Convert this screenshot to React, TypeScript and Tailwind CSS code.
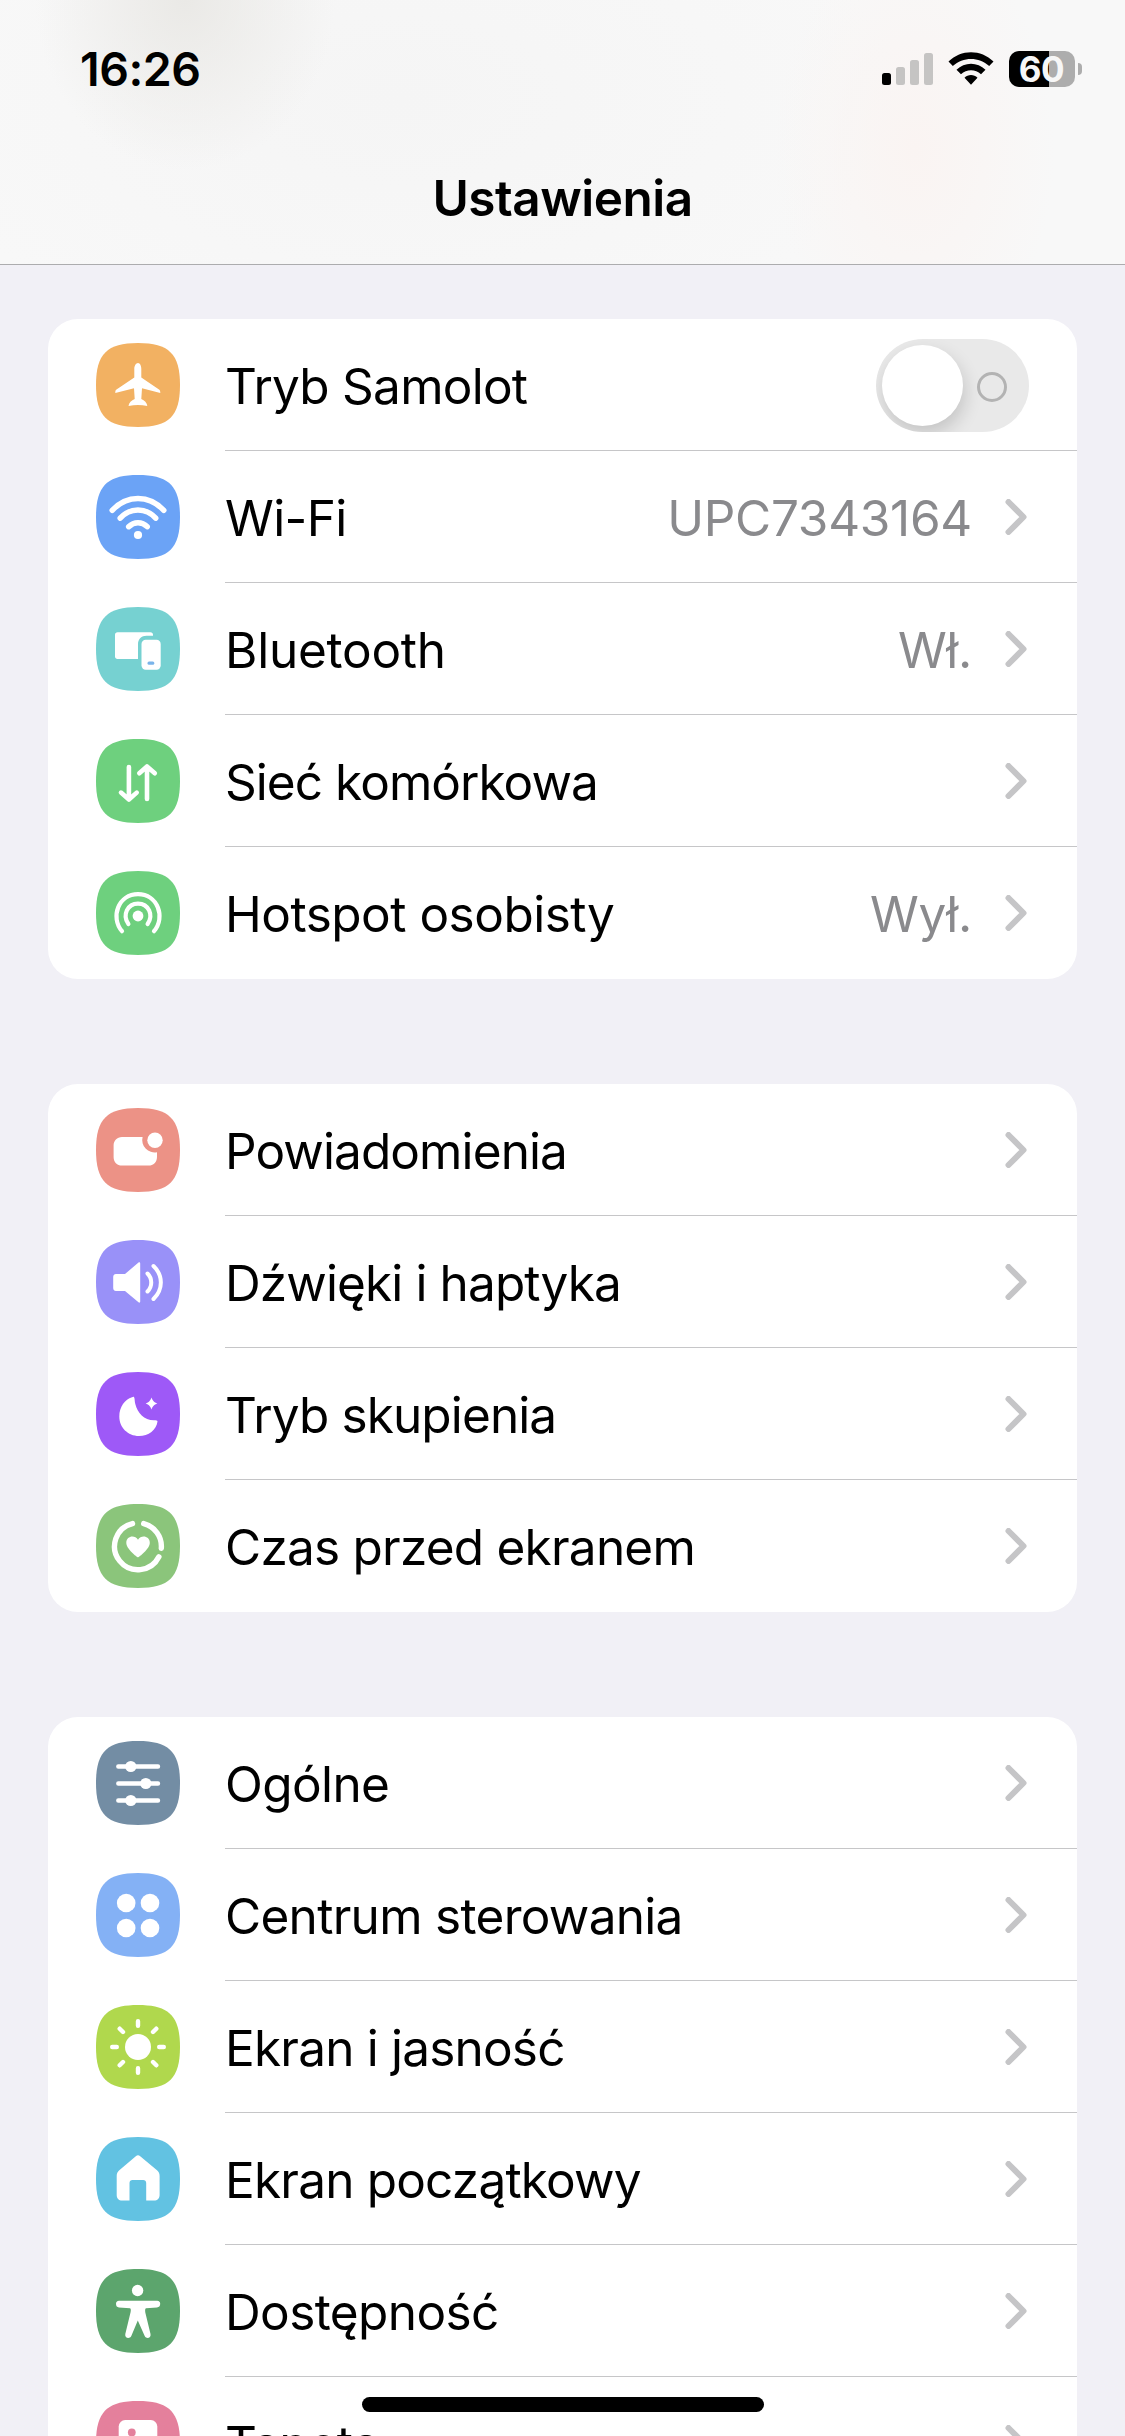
import React from "react";

type RowData = {
  label: string;
  color: string;
  icon: React.ReactNode;
  tracking: string;
  value?: string;
  toggle?: boolean;
};

const line = {
  fill: "none",
  stroke: "white",
  strokeLinecap: "round" as const,
  strokeLinejoin: "round" as const,
};

function IconTile({ color, children }: { color: string; children: React.ReactNode }) {
  return (
    <svg className="block size-[84px] shrink-0" viewBox="0 0 84 84" fill="white">
      <path
        fill={color}
        d="M42 0C73 0 84 11 84 42C84 73 73 84 42 84C11 84 0 73 0 42C0 11 11 0 42 0Z"
      />
      {children}
    </svg>
  );
}

const plane = (
  <path d="M42 20C44 20 45.300 22.800 45.300 26V34.500L63 46.500C64 47.200 64.300 48 64.300 50L46 45.200L45.300 56C48.500 57.500 51 59.700 51.300 63C45 61.800 39 61.800 32.500 63C32.800 59.700 35.500 57.500 38.700 56L38 45.200L19.300 50C19.300 48 19.500 47.200 20.500 46.500L38.300 34.500V26C38.300 22.800 40 20 42 20Z" />
);

const wifi = (
  <g>
    <path {...line} strokeWidth="5.500" d="M16.200 35.300C31 19.500 53 19.500 67.800 35.300" />
    <path {...line} strokeWidth="5.500" d="M24.200 43.200C34 32.400 50 32.400 59.700 43.200" />
    <path {...line} strokeWidth="5.500" d="M32.700 51.700C38 46.300 46 46.300 51.200 51.700" />
    <circle cx="42" cy="60" r="4.100" />
  </g>
);

const devices = (
  <g>
    <path d="M21.500 25.200H54.500C56 25.200 57 26.200 57 27.700V28.800H50.500C45.500 28.800 42 32.300 42 37V52H21.500C20 52 19 51 19 49.500V27.700C19 26.200 20 25.200 21.500 25.200Z" />
    <rect x="45.500" y="32.800" width="19.200" height="30" rx="4.200" />
    <rect x="51.500" y="54.500" width="6.800" height="3.200" rx="1.500" fill="#7ab4ea" />
  </g>
);

const arrows = (
  <path {...line} strokeWidth="4.600" d="M32.900 28V60.500M25 53.600L32.900 60.500L40.700 53.600M51 60V27.500M43.300 34.300L51 27.500L58.800 34.300" />
);

const hotspot = (
  <g>
    <circle cx="42" cy="45" r="5.400" />
    <path {...line} strokeWidth="4.200" d="M32.400 53C26 44 31.500 32.600 42 32.600C52.500 32.600 58 44 51.600 53" />
    <path {...line} strokeWidth="4.200" d="M26 60.200C14 46 22.500 23.200 42 23.200C61.500 23.200 70 46 58 60.200" />
  </g>
);

const notification = (
  <g>
    <path d="M26 29H46.600A12.400 12.400 0 0 0 61 44.200V49C61 54 57.500 57.600 52.500 57.600H26C21 57.600 17.600 54 17.600 49V37.600C17.600 32.600 21 29 26 29Z" />
    <circle cx="59" cy="32.200" r="7.700" />
  </g>
);

const sound = (
  <g>
    <path d="M20 34H29L42.500 22.600C43.300 22 44.200 22.400 44.200 23.500V61.500C44.200 62.600 43.300 63 42.500 62.300L29 51H20C18.300 51 17.200 49.800 17.200 48V37C17.200 35.200 18.300 34 20 34Z" />
    <path {...line} strokeWidth="4" d="M51.500 33.500C56.500 38.500 56.500 46.500 51.500 51.500M57.500 26C67.300 35.500 67.300 49.500 57.500 59" />
  </g>
);

const moon = (
  <g>
    <path d="M38 25C39 27 38.500 29 39.300 32C41.500 41 48 48 58 48.300C60 48.300 61.500 48.500 61.500 49.500C60.500 58 52.500 64 43 64C32 64 23.300 55.500 23.300 44.500C23.300 35 29 27.500 36 25.300C37 24.900 37.600 24.600 38 25Z" />
    <path d="M55.500 25.500C56.800 29 58 30.200 61.300 31.500C58 32.800 56.800 34 55.500 37.500C54.200 34 53 32.800 49.700 31.500C53 30.200 54.200 29 55.500 25.500Z" />
  </g>
);

const screenTime = (
  <g>
    <path {...line} strokeWidth="5.400" d="M36.500 19.600A23.400 23.400 0 1 0 62.900 52.800M47.700 19.600A23.400 23.400 0 0 1 65.300 44.300" />
    <path d="M42 53.300C41 53.300 30.300 45 30.300 38.800C30.300 32 38.800 30.500 42 35.800C45.200 30.500 53.800 32 53.800 38.800C53.800 45 43 53.300 42 53.300Z" />
  </g>
);

const sliders = (
  <g>
    <path {...line} strokeWidth="4.400" d="M22.300 25.500H62M22.300 42.500H62M22.300 59.500H62" />
    <circle cx="34.800" cy="25.500" r="5.600" />
    <circle cx="49.800" cy="42.500" r="5.600" />
    <circle cx="34.800" cy="59.500" r="5.600" />
  </g>
);

const fourDots = (
  <g>
    <circle cx="30.200" cy="30" r="9.300" />
    <circle cx="54" cy="30" r="9.300" />
    <circle cx="30.200" cy="55" r="9.300" />
    <circle cx="54" cy="55" r="9.300" />
  </g>
);

const sun = (
  <g>
    <circle cx="42" cy="42" r="13" />
    <path {...line} strokeWidth="4.400" d="M42 16.200V20.800M42 63.200V67.800M16.200 42H20.800M63.200 42H67.800M23.700 23.700L27 27M57 57L60.300 60.300M60.300 23.700L57 27M27 57L23.700 60.300" />
  </g>
);

const house = (
  <path d="M39.800 19.300C41.300 18 42.700 18 44.200 19.300L61 33.300C62.800 34.800 63.600 36.500 63.600 39V58C63.600 61.300 61.500 63.600 58 63.600H50.200V46C50.200 44.200 49 43 47.200 43H36.500C34.700 43 33.500 44.200 33.500 46V63.600H26.200C22.700 63.600 20.700 61.300 20.700 58V39C20.700 36.500 21.500 34.800 23.300 33.300Z" />
);

const person = (
  <g>
    <circle cx="41.600" cy="21.500" r="5.700" />
    <path d="M23 31.700H61.200C63.200 31.700 64.200 33 64.200 34.800C64.200 37.200 63 38.200 61 38.400L50 39.300C49 39.500 49 41.500 49.300 43.500L54.500 65C55.300 69 50.500 70.500 48.700 67L41.800 51.500L35.300 67C33.500 70.500 28.500 69 29.300 65L34.500 43.500C35 41.500 35 39.500 34 39.300L23 38.400C21 38.200 20 37.200 20 34.800C20 33 21 31.700 23 31.700Z" />
  </g>
);

const wallpaper = (
  <g>
    <rect x="22.700" y="19" width="38.600" height="46" rx="6.500" />
    <circle cx="35.800" cy="31.500" r="3.900" fill="#e4809c" />
  </g>
);

const groups: RowData[][] = [
  [
    { label: "Tryb Samolot", color: "#f2b162", icon: plane, tracking: "tracking-[-0.75px]", toggle: true },
    { label: "Wi-Fi", color: "#6ba3f6", icon: wifi, tracking: "tracking-[-0.6px]", value: "UPC7343164" },
    { label: "Bluetooth", color: "#76d1d1", icon: devices, tracking: "tracking-[-0.25px]", value: "Wł." },
    { label: "Sieć komórkowa", color: "#6ed07e", icon: arrows, tracking: "tracking-[-0.95px]" },
    { label: "Hotspot osobisty", color: "#6ed07e", icon: hotspot, tracking: "tracking-[-0.5px]", value: "Wył." },
  ],
  [
    { label: "Powiadomienia", color: "#ec9286", icon: notification, tracking: "tracking-[-0.9px]" },
    { label: "Dźwięki i haptyka", color: "#9991f8", icon: sound, tracking: "tracking-[-0.88px]" },
    { label: "Tryb skupienia", color: "#9e59f7", icon: moon, tracking: "tracking-[-0.88px]" },
    { label: "Czas przed ekranem", color: "#8bc57b", icon: screenTime, tracking: "tracking-[-0.77px]" },
  ],
  [
    { label: "Ogólne", color: "#738da4", icon: sliders, tracking: "tracking-[-0.6px]" },
    { label: "Centrum sterowania", color: "#84b1f5", icon: fourDots, tracking: "tracking-[-0.7px]" },
    { label: "Ekran i jasność", color: "#b0d84d", icon: sun, tracking: "tracking-[-0.8px]" },
    { label: "Ekran początkowy", color: "#62c2e2", icon: house, tracking: "tracking-[-0.8px]" },
    { label: "Dostępność", color: "#5ca56d", icon: person, tracking: "tracking-[-0.6px]" },
    { label: "Tapeta", color: "#e4809c", icon: wallpaper, tracking: "tracking-[-0.9px]" },
  ],
];

function Chevron() {
  return (
    <svg className="mr-[2px] ml-[33px] block h-9 w-[22px] shrink-0" viewBox="0 0 22 36">
      <path d="M3.500 3L18.500 18L3.500 33" fill="none" stroke="#c5c5c7" strokeWidth="6" strokeLinecap="round" strokeLinejoin="round" />
    </svg>
  );
}

function Toggle() {
  return (
    <div className="flex h-[93px] w-[153px] items-center justify-between overflow-hidden rounded-full bg-[#e9e9e9] pr-[22px] pl-1.5">
      <div className="size-[81px] rounded-full bg-white shadow-[2px_8px_18px_rgba(0,0,0,0.16)]" />
      <div className="mt-[3px] size-[30px] rounded-full border-[3px] border-[#b3b3b3]" />
    </div>
  );
}

function Row({ row, last }: { row: RowData; last: boolean }) {
  return (
    <div className="flex h-[132px] pl-12">
      <div className="flex items-center">
        <IconTile color={row.color}>{row.icon}</IconTile>
      </div>
      <div
        className={
          last
            ? "ml-[45px] flex flex-1 items-center border-b border-transparent pr-12 pt-px"
            : "ml-[45px] flex flex-1 items-center border-b border-[#c6c6c8] pr-12 pt-px"
        }
      >
        <span className={`flex-1 pt-[2px] text-[49.500px] leading-[60px] whitespace-nowrap text-black ${row.tracking}`}>{row.label}</span>
        {row.value && (
          <span className="pt-[2px] text-[49.500px] leading-[60px] tracking-[-0.3px] whitespace-nowrap text-[#8a8a8d]">{row.value}</span>
        )}
        {row.toggle ? <Toggle /> : <Chevron />}
      </div>
    </div>
  );
}

function StatusIcons() {
  return (
    <div className="flex items-center">
      <svg className="block h-9 w-[51px]" viewBox="0 0 51 36">
        <rect x="0" y="22" width="9" height="12" rx="2.500" fill="black" />
        <rect x="14" y="16" width="9" height="18" rx="2.500" fill="#c5c4c3" />
        <rect x="28" y="9" width="9" height="25" rx="2.500" fill="#c5c4c3" />
        <rect x="42" y="2" width="9" height="32" rx="2.500" fill="#c5c4c3" />
      </svg>
      <svg className="ml-[15px] block h-9 w-[46px]" viewBox="0 0 46 36">
        <path d="M0.500 10.500C13-2 33-2 45.500 10.500L41.200 15C31 5.500 15 5.500 4.800 15ZM8.500 18.800C16.500 10.800 29.500 10.800 37.500 18.800L33 23.200C27.500 18 18.500 18 13 23.200ZM16.500 26.800C20 23 26 23 29.500 26.800L23 33.800Z" fill="black" />
      </svg>
      <div className="ml-[15px] flex h-9 w-[66px] items-center justify-center rounded-[10px] bg-[linear-gradient(to_right,#000_40px,#adadad_40px)] pr-px text-[35px] leading-none font-bold tracking-[-0.5px] text-[#f7f7f7]">
        60
      </div>
      <div className="ml-[3px] h-3 w-1 rounded-r-full bg-[#adadad]" />
    </div>
  );
}

export default function App() {
  return (
    <div className="relative flex h-[2436px] w-[1125px] flex-col overflow-hidden bg-[#f1f0f6] font-['Inter',sans-serif]">
      <header className="h-[265px] shrink-0 border-b border-[#acacae] bg-[#f8f8f8] bg-[radial-gradient(ellipse_150px_170px_at_185px_0px,#eae9e6_0%,transparent_100%),radial-gradient(ellipse_140px_220px_at_915px_150px,#faf4f2_0%,transparent_100%),radial-gradient(ellipse_500px_260px_at_400px_100px,#f5f5f5_0%,transparent_100%)]">
        <div className="flex h-[138px] items-center justify-between pr-[43px] pl-20">
          <span className="text-[46.500px] leading-none font-semibold tracking-[-0.5px]">16:26</span>
          <StatusIcons />
        </div>
        <h1 className="pt-[30px] text-center text-[49.500px] leading-[60px] font-semibold tracking-[-0.5px]">Ustawienia</h1>
      </header>
      <main className="flex flex-col gap-[105px] px-12 pt-[54px]">
        {groups.map((rows, i) => (
          <section key={i} className="overflow-hidden rounded-[30px] bg-white">
            {rows.map((row, j) => (
              <Row key={row.label} row={row} last={j === rows.length - 1} />
            ))}
          </section>
        ))}
      </main>
      <div className="absolute bottom-6 left-[362px] h-[15px] w-[402px] rounded-full bg-black" />
    </div>
  );
}
